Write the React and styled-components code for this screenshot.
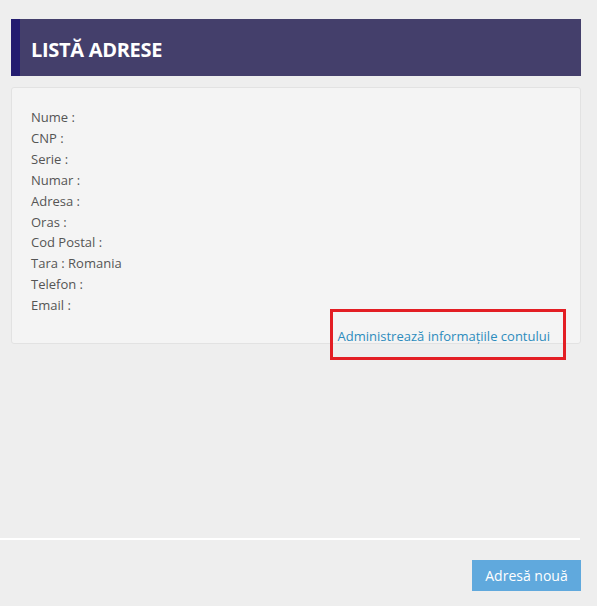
import styled, { createGlobalStyle } from "styled-components";

const GlobalStyle = createGlobalStyle`
  html, body {
    margin: 0;
    padding: 0;
    background: #eeeeee;
  }
  body {
    font-family: "Open Sans", "Liberation Sans", sans-serif;
  }
`;

const Page = styled.div`
  width: 597px;
  height: 606px;
  padding-top: 19px;
  box-sizing: border-box;
  display: flex;
  flex-direction: column;
`;

const Section = styled.div`
  margin: 0 16px 0 11px;
  display: flex;
  flex-direction: column;
  gap: 11px;
`;

const Header = styled.div`
  height: 57px;
  background: #443f6b;
  border-left: 9px solid #231c70;
  display: flex;
  align-items: center;
  padding: 3px 0 0 11px;
  box-sizing: border-box;
`;

const Title = styled.h1`
  margin: 0;
  font-size: 20px;
  font-weight: 700;
  color: #ffffff;
  letter-spacing: -0.3px;
`;

const Card = styled.div`
  background: #f4f4f4;
  border: 1px solid #e2e2e2;
  border-radius: 3px;
  padding: 19px 19px 0 19px;
  height: 257px;
  box-sizing: border-box;
`;

const InfoLine = styled.div`
  font-size: 13px;
  line-height: 20.9px;
  color: #555555;
`;

const LinkRow = styled.div`
  display: flex;
  justify-content: flex-end;
  margin-top: 11px;
  padding-right: 11px;
`;

const Link = styled.a`
  position: relative;
  display: inline-block;
  line-height: 18px;
  font-size: 13px;
  color: #2d8cbd;
  text-decoration: none;
`;

const Highlight = styled.span`
  position: absolute;
  left: -8px;
  right: -16px;
  top: -18px;
  bottom: -15px;
  border: 3px solid #e31e24;
`;

const Spacer = styled.div`
  flex: 1;
`;

const Divider = styled.div`
  height: 2px;
  width: 580px;
  background: #ffffff;
  margin-bottom: 20px;
`;

const Footer = styled.div`
  display: flex;
  justify-content: flex-end;
  padding-right: 16px;
  margin-bottom: 15px;
`;

const Button = styled.button`
  width: 109px;
  height: 31px;
  border: none;
  background: #60a9dd;
  color: #ffffff;
  font-family: "Open Sans", "Liberation Sans", sans-serif;
  font-size: 14px;
  cursor: pointer;
`;

const fields = [
  ["Nume", ""],
  ["CNP", ""],
  ["Serie", ""],
  ["Numar", ""],
  ["Adresa", ""],
  ["Oras", ""],
  ["Cod Postal", ""],
  ["Tara", "Romania"],
  ["Telefon", ""],
  ["Email", ""],
];

export default function App() {
  return (
    <>
      <GlobalStyle />
      <Page>
        <Section>
          <Header>
            <Title>LISTĂ ADRESE</Title>
          </Header>
          <Card>
            {fields.map(([label, value]) => (
              <InfoLine key={label}>
                {label} : {value}
              </InfoLine>
            ))}
            <LinkRow>
              <Link href="#">
                Administrează informațiile contului
                <Highlight />
              </Link>
            </LinkRow>
          </Card>
        </Section>
        <Spacer />
        <Divider />
        <Footer>
          <Button>Adresă nouă</Button>
        </Footer>
      </Page>
    </>
  );
}
